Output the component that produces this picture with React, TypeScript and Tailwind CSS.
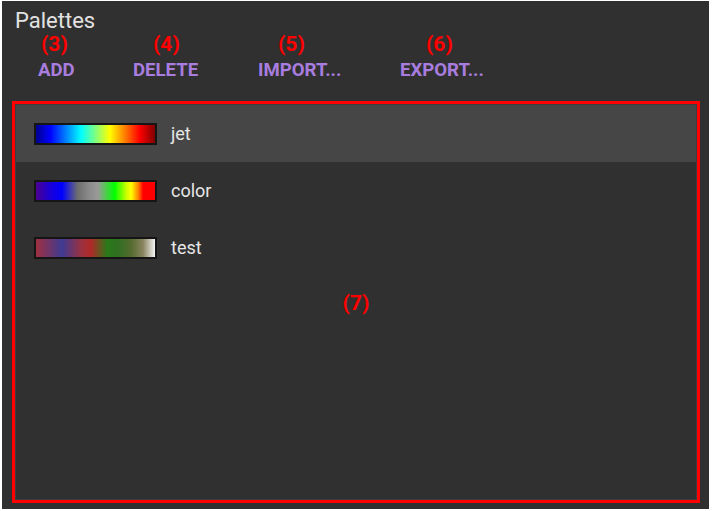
import React from "react";

const palettes = [
  {
    name: "jet",
    gradient:
      "linear-gradient(to right, #00008f 0%, #0000ff 12%, #00ffff 38%, #ffff00 62%, #ff0000 87%, #800000 100%)",
    active: true,
  },
  {
    name: "color",
    gradient:
      "linear-gradient(to right, #4b0090 0%, #1a00d8 12%, #0000ff 22%, #6e6e6e 35%, #8c8c8c 45%, #9a9a9a 52%, #00ff00 66%, #ccff00 76%, #ffff00 80%, #ff8000 86%, #ff0000 90%, #ff0000 100%)",
    active: false,
  },
  {
    name: "test",
    gradient:
      "linear-gradient(to right, #a03040 0%, #3e3a92 22%, #9a3040 38%, #b02828 46%, #2a7a1a 60%, #2e7020 68%, #556b2f 80%, #8a8460 90%, #f4f4f4 100%)",
    active: false,
  },
];

export default function App() {
  const font = { fontFamily: 'Roboto, "Liberation Sans", sans-serif' };
  return (
    <div className="w-[713px] h-[511px] bg-white pt-[1px] pl-[2px] pr-[4px] pb-[2px]" style={font}>
      <div className="w-full h-full bg-[#303030] flex flex-col">
        <div className="h-[30px] pl-[13px] pt-[8px] text-[22px] leading-[24px] text-[#e2e2e2]">
          Palettes
        </div>
        <div className="flex h-[26px] items-center pl-[39px] text-[21px] font-bold text-[#ff0000] leading-[24px]">
          <div className="w-[112px]">(3)</div>
          <div className="w-[125px]">(4)</div>
          <div className="w-[148px]">(5)</div>
          <div>(6)</div>
        </div>
        <div className="flex h-[26px] items-center pl-[36px] text-[18.6px] font-bold text-[#a87ddf] leading-[20px]">
          <div className="w-[95px]">ADD</div>
          <div className="w-[125px]">DELETE</div>
          <div className="w-[142px]">IMPORT...</div>
          <div>EXPORT...</div>
        </div>
        <div className="mt-[18px] ml-[10px] mr-[9px] mb-[6px] flex-1 border-[3px] border-[#ff0000] relative">
          <div className="w-full h-full border border-[#3d3d3d] bg-[#303030]">
            {palettes.map((p) => (
              <div
                key={p.name}
                className={`h-[57px] flex items-center pl-[18px] ${p.active ? "bg-[#464646]" : ""}`}
              >
                <div
                  className="w-[123px] h-[22px] border-2 border-[#151515]"
                  style={{ background: p.gradient }}
                />
                <span className="ml-[14px] text-[18px] text-[#e6e6e6]">{p.name}</span>
              </div>
            ))}
          </div>
          <div className="absolute inset-0 flex items-center justify-center pt-[4px] text-[21px] font-bold text-[#ff0000]">
            (7)
          </div>
        </div>
      </div>
    </div>
  );
}
